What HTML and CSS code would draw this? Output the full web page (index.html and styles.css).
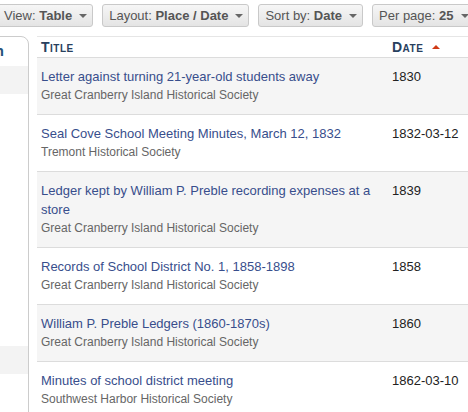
FILE: index.html
```html
<!DOCTYPE html>
<html>
<head>
<meta charset="utf-8">
<link rel="stylesheet" href="styles.css">
</head>
<body>
<div class="page">
  <div class="toolbar">
    <div class="btn">View: <b>Table</b><span class="caret"></span></div>
    <div class="btn">Layout: <b>Place / Date</b><span class="caret"></span></div>
    <div class="btn">Sort by: <b>Date</b><span class="caret"></span></div>
    <div class="btn">Per page: <b>25</b><span class="caret"></span></div>
  </div>
  <div class="main">
    <aside class="sidebar">
      <h3 class="side-title">Location</h3>
      <ul class="side-list">
        <li class="side-item shaded">Maine</li>
        <li class="side-item">Cranberry</li>
        <li class="side-item">Tremont</li>
        <li class="side-item">Southwest</li>
        <li class="side-item">Harbor</li>
        <li class="side-item">Islesford</li>
        <li class="side-item">Bar</li>
        <li class="side-item">Bass</li>
        <li class="side-item">Other</li>
        <li class="side-item">Seal</li>
        <li class="side-item shaded">More</li>
      </ul>
    </aside>
    <div class="results">
      <div class="row head">
        <div class="col-title">Title</div>
        <div class="col-date">Date <span class="sort-up"></span></div>
      </div>
      <div class="row odd">
        <div class="cell"><a class="item-link">Letter against turning 21-year-old students away</a><div class="item-org">Great Cranberry Island Historical Society</div></div>
        <div class="cell date">1830</div>
      </div>
      <div class="row">
        <div class="cell"><a class="item-link">Seal Cove School Meeting Minutes, March 12, 1832</a><div class="item-org">Tremont Historical Society</div></div>
        <div class="cell date">1832-03-12</div>
      </div>
      <div class="row odd">
        <div class="cell"><a class="item-link">Ledger kept by William P. Preble recording expenses at a store</a><div class="item-org">Great Cranberry Island Historical Society</div></div>
        <div class="cell date">1839</div>
      </div>
      <div class="row">
        <div class="cell"><a class="item-link">Records of School District No. 1, 1858-1898</a><div class="item-org">Great Cranberry Island Historical Society</div></div>
        <div class="cell date">1858</div>
      </div>
      <div class="row odd">
        <div class="cell"><a class="item-link">William P. Preble Ledgers (1860-1870s)</a><div class="item-org">Great Cranberry Island Historical Society</div></div>
        <div class="cell date">1860</div>
      </div>
      <div class="row">
        <div class="cell"><a class="item-link">Minutes of school district meeting</a><div class="item-org">Southwest Harbor Historical Society</div></div>
        <div class="cell date">1862-03-10</div>
      </div>
    </div>
  </div>
</div>
</body>
</html>
```
FILE: styles.css
```css
html, body {
  margin: 0;
  padding: 0;
  background: #fff;
  overflow: hidden;
}
body {
  font-family: "Liberation Sans", Arial, sans-serif;
  font-size: 13px;
  color: #222;
}
.page {
  margin-left: -171px;
  width: 660px;
}
.toolbar {
  display: flex;
  gap: 9px;
  padding: 4px 0 0 168px;
  height: 23px;
}
.btn {
  display: flex;
  align-items: center;
  box-sizing: border-box;
  height: 23px;
  padding: 0 5px 0 6px;
  border: 1px solid #c9c9c9;
  border-radius: 3px;
  background: linear-gradient(#f6f6f6, #e4e4e4);
  color: #555;
  font-size: 13px;
  white-space: pre;
}
.btn b {
  color: #555;
}
.caret {
  width: 0;
  height: 0;
  margin-left: 7px;
  border-left: 4px solid transparent;
  border-right: 4px solid transparent;
  border-top: 4px solid #666;
}
.main {
  display: flex;
  gap: 8px;
  margin-top: 9px;
}
.sidebar {
  box-sizing: border-box;
  width: 200px;
  min-height: 400px;
  border: 1px solid #ccc;
  border-top-right-radius: 8px;
  flex: none;
}
.side-title {
  margin: 0;
  padding: 7px 24px 8px 0;
  text-align: right;
  font-size: 15px;
  font-weight: bold;
  color: #24527a;
  line-height: 14px;
}
.side-list {
  list-style: none;
  margin: 0;
  padding: 0;
}
.side-item {
  height: 28px;
  color: transparent;
}
.side-item.shaded {
  background: #f3f3f3;
}
.results {
  width: 450px;
  flex: none;
  border-top: 1px solid #e6e6e6;
}
.row {
  display: grid;
  grid-template-columns: 351px 1fr;
  border-bottom: 1px solid #dcdcdc;
}
.row.odd {
  background: #f5f5f5;
}
.row.head {
  height: 20px;
  align-items: center;
  font-variant: small-caps;
  font-weight: bold;
  font-size: 14px;
  letter-spacing: 0.5px;
  color: #28405e;
  line-height: 16px;
}
.row.head > div {
  padding: 0 4px;
}
.sort-up {
  display: inline-block;
  width: 0;
  height: 0;
  margin-left: 4px;
  vertical-align: 3px;
  border-left: 4px solid transparent;
  border-right: 4px solid transparent;
  border-bottom: 4px solid #d03a16;
}
.cell {
  padding: 9px 4px 10px;
}
.item-link {
  display: block;
  color: #384e8c;
  font-size: 13px;
  line-height: 19px;
  text-decoration: none;
}
.item-org {
  color: #666;
  font-size: 12px;
  line-height: 18px;
}
.date {
  font-size: 13px;
  line-height: 19px;
  color: #222;
}
```
